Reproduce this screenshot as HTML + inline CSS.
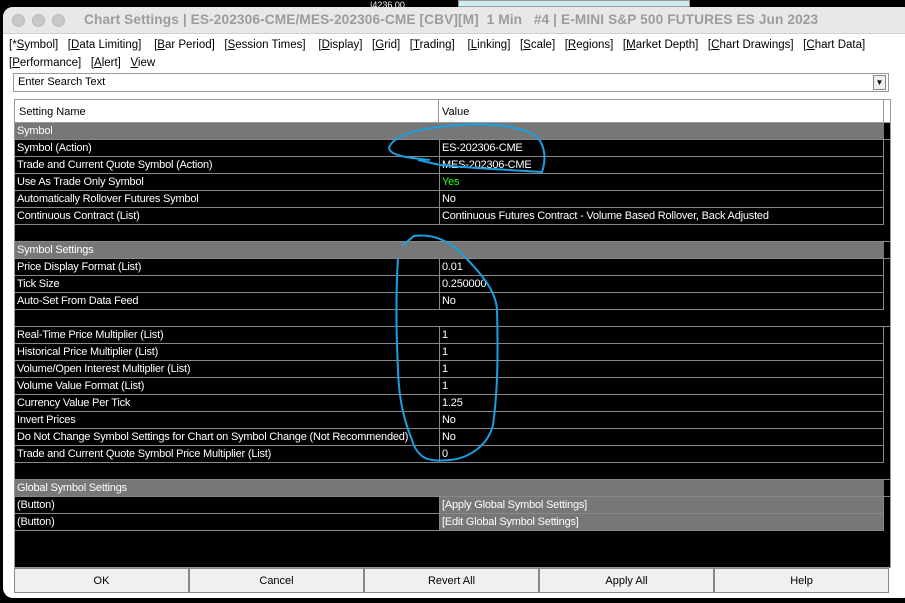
<!DOCTYPE html>
<html><head><meta charset="utf-8"><style>
*{margin:0;padding:0;box-sizing:border-box}
body{width:905px;height:603px;background:#000;position:relative;overflow:hidden;font-family:"Liberation Sans",sans-serif}
.win{position:absolute;left:3px;top:7px;width:910px;height:591px;background:#fff;border-radius:10px;overflow:hidden}
.title{height:27px;background:#e8e8e8;border-bottom:1px solid #d0d0d0;position:relative}
.dot{position:absolute;top:7px;width:13px;height:13px;border-radius:50%;background:#c8c8c8;border:1px solid #b8b8b8}
.ttl{position:absolute;left:81px;top:5px;font-size:13.7px;font-weight:bold;color:#9c9c9c;white-space:nowrap;letter-spacing:0.1px}
.menu{position:absolute;left:6px;font-size:11.5px;color:#000;white-space:nowrap}
.search{position:absolute;left:13px;top:73px;width:876px;height:19px;border:1px solid #999;background:#fff;font-size:11px;padding:2px 4px}
.dd{position:absolute;right:2px;top:1px;width:13px;height:15px;border:1px solid #888;background:#eee;font-size:8px;text-align:center;line-height:14px}
.tbl{position:absolute;left:14px;top:99px;width:877px;height:469px;background:#000;border:1px solid #999}
.hdr{position:absolute;left:0;top:0;width:875px;height:23px;background:#fff;border-bottom:1px solid #999;font-size:11px}
.row{position:absolute;left:0;width:869px;height:17px;border-bottom:1px solid #888;font-size:11px;color:#fff;line-height:16px;letter-spacing:-0.2px}
.row .a{position:absolute;left:2px;top:0}
.row .b{position:absolute;left:424px;top:0;height:16px;border-left:1px solid #888;padding-left:2px;width:445px}
.sec{background:#777}
.btns{position:absolute;left:14px;top:568px;width:875px;height:25px;display:flex}
.btns div{flex:1;background:#f0f0f0;border:1px solid #888;font-size:11px;text-align:center;line-height:24px}
</style></head><body>
<div style="position:absolute;left:370px;top:0;width:12px;height:8px;color:#fff;font-size:9px">|4236.00</div>
<div style="position:absolute;left:458px;top:0;width:232px;height:7px;background:#cdeef0;border:1px solid #999"></div>
<div class="win">
<div class="title">
<div class="dot" style="left:9px"></div><div class="dot" style="left:29px"></div><div class="dot" style="left:49px"></div>
<div class="ttl">Chart Settings | ES-202306-CME/MES-202306-CME [CBV][M]&nbsp; 1 Min &nbsp; #4 | E-MINI S&amp;P 500 FUTURES ES Jun 2023</div>
</div>
<div class="menu" style="top:32px">[*<u>S</u>ymbol] &nbsp; [<u>D</u>ata Limiting] &nbsp;&nbsp; [<u>B</u>ar Period] &nbsp; [<u>S</u>ession Times] &nbsp;&nbsp; [<u>D</u>isplay] &nbsp; [<u>G</u>rid] &nbsp; [<u>T</u>rading] &nbsp;&nbsp; [<u>L</u>inking] &nbsp; [<u>S</u>cale] &nbsp; [<u>R</u>egions] &nbsp; [<u>M</u>arket Depth] &nbsp; [<u>C</u>hart Drawings] &nbsp; [<u>C</u>hart Data]</div>
<div class="menu" style="top:50px">[<u>P</u>erformance] &nbsp; [<u>A</u>lert] &nbsp; <u>V</u>iew</div>
</div>
<div class="search">Enter Search Text<div class="dd">▼</div></div>
<div class="tbl">
<div class="hdr"><span style="position:absolute;left:4px;top:6px">Setting Name</span><span style="position:absolute;left:423px;top:0;height:23px;border-left:1px solid #999;padding:6px 3px">Value</span><span style="position:absolute;left:868px;top:0;height:23px;border-left:1px solid #999"></span></div>
<div id="rows"></div>
</div>
<div class="btns"><div>OK</div><div>Cancel</div><div>Revert All</div><div>Apply All</div><div>Help</div></div>
<script>
var R=[["Symbol","",1],["Symbol (Action)","ES-202306-CME"],["Trade and Current Quote Symbol (Action)","MES-202306-CME"],["Use As Trade Only Symbol","Yes",0,1],["Automatically Rollover Futures Symbol","No"],["Continuous Contract (List)","Continuous Futures Contract - Volume Based Rollover, Back Adjusted"],null,["Symbol Settings","",1],["Price Display Format (List)","0.01"],["Tick Size","0.250000"],["Auto-Set From Data Feed","No"],null,["Real-Time Price Multiplier (List)","1"],["Historical Price Multiplier (List)","1"],["Volume/Open Interest Multiplier (List)","1"],["Volume Value Format (List)","1"],["Currency Value Per Tick","1.25"],["Invert Prices","No"],["Do Not Change Symbol Settings for Chart on Symbol Change (Not Recommended)","No"],["Trade and Current Quote Symbol Price Multiplier (List)","0"],null,["Global Symbol Settings","",1],[" (Button)","[Apply Global Symbol Settings]",2],[" (Button)","[Edit Global Symbol Settings]",2]];
var h="";R.forEach(function(r,i){var t=23+i*17;
if(!r){h+='<div class="row" style="top:'+t+'px;width:876px"></div>';return;}
if(r[2]==1){h+='<div class="row sec" style="top:'+t+'px"><span class="a">'+r[0]+'</span></div><div style="position:absolute;left:869px;top:'+t+'px;width:7px;height:17px;border-bottom:1px solid #888"></div>';return;}
h+='<div class="row" style="top:'+t+'px"><span class="a">'+r[0]+'</span><span class="b" style="'+(r[3]?'color:#2f2':'')+(r[2]==2?'background:#777;':'')+'">'+r[1]+'</span></div><div style="position:absolute;left:868px;top:'+t+'px;height:17px;border-left:1px solid #888"></div>';});
document.getElementById("rows").innerHTML=h;
</script>
<svg width="905" height="603" style="position:absolute;left:0;top:0" fill="none" stroke="#1a9fe0" stroke-width="2">
<path d="M430 160 C410 158 390 156 389 148 C392 138 410 130 440 127 C470 123 510 122 535 135 C546 145 546 160 542 172 C510 170 470 168 440 165 L418 160"/>
<path d="M402 246 L414 236 C430 234 445 238 460 252 C480 272 496 290 497 310 C498 350 498 390 493 425 C488 445 470 458 450 460 C430 462 418 460 412 440 C404 420 399 400 398 370 C396 330 396 290 398 258"/>
</svg>
</body></html>
